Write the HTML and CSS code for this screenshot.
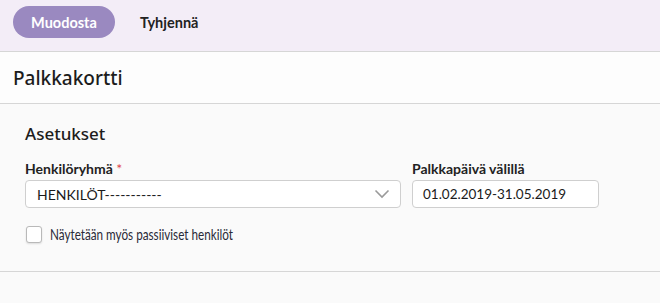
FILE: index.html
```html
<!DOCTYPE html>
<html lang="fi">
<head>
<meta charset="utf-8">
<title>Palkkakortti</title>
<link rel="stylesheet" href="styles.css">
</head>
<body>
<div class="toolbar">
  <button class="btn btn-primary">Muodosta</button>
  <button class="btn btn-plain">Tyhjennä</button>
</div>
<div class="titlebar">
  <h1 class="title">Palkkakortti</h1>
</div>
<div class="content">
  <h2 class="section-title">Asetukset</h2>
  <div class="fields">
    <div class="field field-group">
      <label class="label">Henkilöryhmä <span class="req">*</span></label>
      <div class="select">
        <span class="select-value">HENKILÖT-----------</span>
        <svg class="chevron" width="16" height="10" viewBox="0 0 16 10"><path d="M1.5 1.5 L8 8 L14.5 1.5" fill="none" stroke="#9a9a9a" stroke-width="1.6"/></svg>
      </div>
    </div>
    <div class="field field-date">
      <label class="label">Palkkapäivä välillä</label>
      <div class="input">01.02.2019-31.05.2019</div>
    </div>
  </div>
  <label class="check">
    <span class="box"></span>
    <span class="check-text">Näytetään myös passiiviset henkilöt</span>
  </label>
</div>
<div class="footer"></div>
</body>
</html>
```

FILE: styles.css
```css
* { box-sizing: border-box; }
html, body { margin: 0; padding: 0; }
body {
  font-family: "Lato", "Noto Sans", sans-serif;
  background: #fafafa;
  color: #222;
  width: 660px;
  height: 303px;
  overflow: hidden;
}
.toolbar {
  height: 52px;
  background: #f3edf7;
  border-bottom: 1px solid #d6d6d6;
  display: flex;
  align-items: flex-start;
  padding: 6px 0 0 13px;
  gap: 8px;
}
.btn {
  font-family: inherit;
  font-size: 14.5px;
  font-weight: 700;
  border: none;
  height: 32px;
  border-radius: 16px;
  cursor: pointer;
}
.btn-primary {
  background: #9a89c0;
  color: #fff;
  width: 102px;
}
.btn-plain {
  background: transparent;
  color: #222;
  padding: 0 17px;
}
.titlebar {
  height: 52px;
  background: #fdfdfd;
  border-bottom: 1px solid #d6d6d6;
  padding: 0 13px;
  display: flex;
  align-items: center;
}
.title {
  margin: 0;
  font-family: "Noto Sans", "Lato", sans-serif;
  font-size: 19px;
  font-weight: 500;
  color: #1c1c1c;
}
.content {
  padding: 18px 25px 0 25px;
  height: 168px;
  border-bottom: 1px solid #d6d6d6;
}
.section-title {
  margin: 0 0 13px 0;
  font-family: "Noto Sans", "Lato", sans-serif;
  font-size: 17px;
  font-weight: 500;
  color: #1c1c1c;
  line-height: 24px;
}
.fields {
  display: flex;
  gap: 11px;
}
.field { display: flex; flex-direction: column; }
.field-group { width: 376px; }
.field-date { width: 187px; }
.label {
  font-size: 14px;
  font-weight: 700;
  color: #222;
  line-height: 20px;
  margin-bottom: 1px;
}
.req { color: #e0474c; font-weight: 400; }
.select, .input {
  height: 28px;
  border: 1px solid #cfcfcf;
  border-radius: 4px;
  background: #fff;
  display: flex;
  align-items: center;
  font-size: 14px;
  color: #1a1a1a;
}
.select { padding: 0 10px 0 11px; justify-content: space-between; }
.input { padding: 0 10px; font-size: 13.5px; }
.check {
  display: flex;
  align-items: center;
  gap: 8px;
  margin-top: 17px;
  margin-left: 1px;
}
.box {
  flex: none;
  width: 16px;
  height: 17px;
  border: 1px solid #b9b9b9;
  border-radius: 3px;
  background: #fff;
  box-shadow: 0 1px 2px rgba(0,0,0,0.12);
}
.check-text {
  display: inline-block;
  font-size: 15px;
  color: #2a2a38;
  white-space: nowrap;
  transform: scaleX(0.78);
  transform-origin: left center;
}
.footer { height: 32px; }
```
